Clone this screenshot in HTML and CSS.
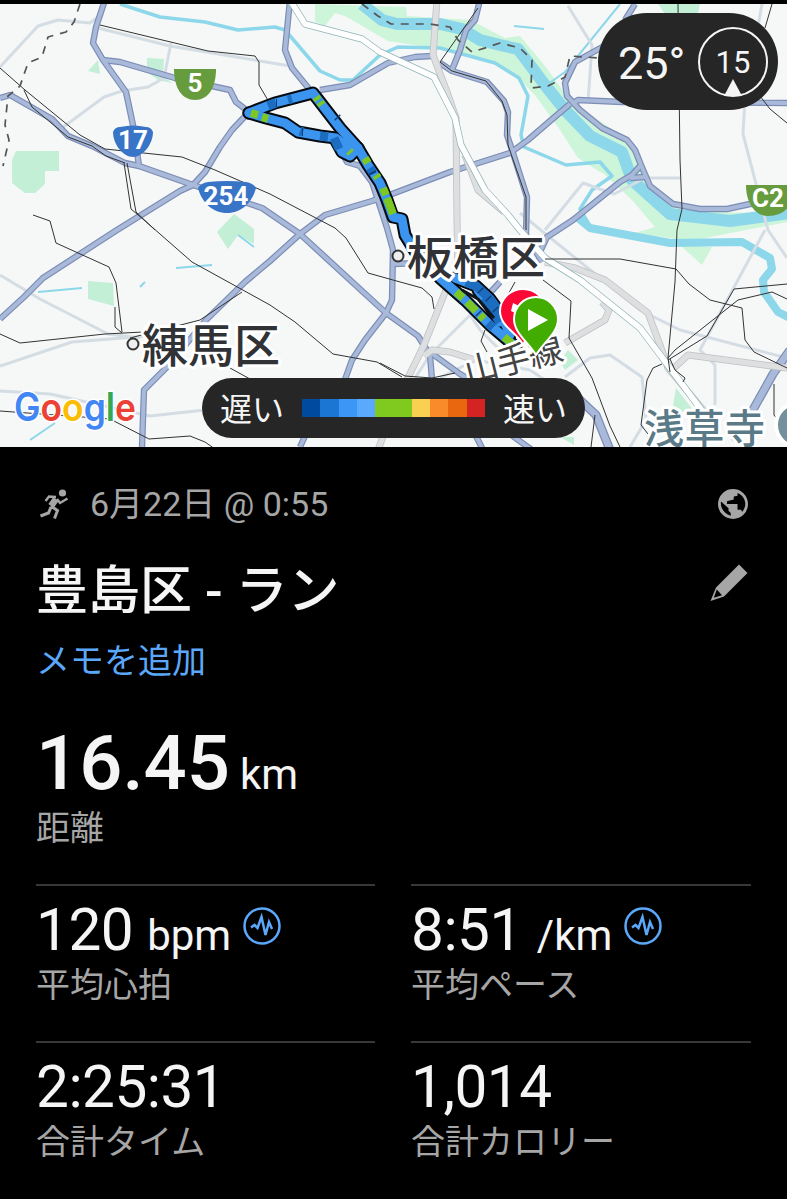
FILE: index.html
```
<!DOCTYPE html>
<html lang="ja">
<head>
    <meta charset="UTF-8">
    <meta name="viewport" content="width=device-width, initial-scale=1.0">
    <title>豊島区 - ラン</title>
    <link rel="stylesheet" href="styles.css">
</head>
<body>

    <div class="map">
        <svg class="map-canvas" viewBox="0 4 787 443">
            <defs>
                <g id="roads">
                    <path d="M105 0L96 27L93 43L103 60L126 92L134 130L139 166"/>
                    <path d="M103 60L120 62L175 78L230 90L236 102L249 112L232 130L220 147L205 172L193 185L180 191L117 230L80 254L43 278L24 297L0 319"/>
                    <path d="M0 98L10 95L52 119L68 136L92 146L125 163L139 166L193 185L262 208L300 234L386 313L418 336L430 355L432 380"/>
                    <path d="M427 350L460 374L500 398L525 385"/>
                    <path d="M142 447L144 390L168 366L206 320L245 282L270 261L300 234L325 215L372 201L392 194L450 172L510 153L528 140L550 121L570 104"/>
                    <path d="M290 0L285 50L292 68L310 90M320 90L350 85L388 63L415 57L432 56"/>
                    <path d="M440 63L452 71L487 82L504 101L508 112L507 135L513 153L527 197L526 235L542 262"/>
                    <path d="M480 0L475 20L466 30L460 50L452 70"/>
                    <path d="M635 4L625 20M606 45L575 62L565 83L567 96L580 110L602 128L627 140L635 150L641 165L650 186L673 204L700 209L727 209L750 204L775 203"/>
                    <path d="M572 104L578 100L622 102L787 103"/>
                    <path d="M540 252L547 237L573 220L620 182L632 175L641 165M630 178L645 177"/>
                    <path d="M340 150L347 162L360 166L372 182L387 228L393 250L392 300L386 313L365 340L352 360L343 385"/>
                    <path d="M393 264L420 263M488 295L500 282M300 447L305 436M475 434L483 450M510 434L532 450"/>
                </g>
                <g id="trunks">
                    <path d="M437 0L433 55L447 92L456 118L457 220L458 270L446 290L424 345L402 390"/>
                    <path d="M424 356L432 350L450 352L475 360M565 343L605 320L609 310L602 302"/>
                    <path d="M545 262L575 268L605 280L648 313L660 345L668 368L710 418M674 368L688 355L787 368M465 155L478 190L504 212M378 450L384 434"/>
                </g>
                <path id="expressway" d="M290 0L305 24L362 39L380 52L434 77L455 118L461 145L485 190L508 215L520 230L545 258L580 280L640 328L670 368L712 424"/>
                <g id="route">
                    <path d="M249 113L275 103L313 93L340 128L358 148L368 165L380 183L387 200L393 217L402 219L405 235L416 253L440 278L465 300L490 325L516 347"/>
                    <path d="M249 113L266 118L285 123L298 132L320 136L336 138L348 147M336 141L342 152L350 156L358 148"/>
                    <path d="M455 278L476 286L490 299L501 314L510 335M478 290L490 306L500 322"/>
                </g>
            </defs>

            <!-- parks -->
            <g class="park">
                <path d="M16 151H59V171H45V184L35 193H25L12 183V160Z"/>
                <path d="M98 60L100 74L88 71ZM147 58L164 59L163 76L172 83L158 80L147 72Z"/>
                <path d="M88 281L113 283L114 306L88 299ZM217 232L234 214L254 229V244L238 235L228 249Z"/>
                <path d="M658 4H700L697 18H668ZM568 350L578 360L565 370L560 361ZM676 388L693 410L680 412L673 406ZM560 437H574V445Z"/>
            </g>
            <g class="bank">
                <path d="M315 4L406 7L407 16L470 20L505 38L520 36L545 66L572 103L632 142L650 186L680 211L787 214V222L690 241L635 233L655 227L632 200L608 178L575 145L560 130L535 95L518 78L490 62L460 52L388 41L345 16L335 13L325 26L315 22Z"/>
                <path d="M560 130L590 148L612 176L600 172L578 158ZM680 245L712 247L702 265Z"/>
            </g>

            <!-- rivers -->
            <path class="river" d="M362 4L382 20L397 24L440 24L462 29L480 40L500 45L518 49L545 85L565 110L590 136L622 152L632 180L670 214L730 221L790 213"/>
            <g class="stream">
                <path class="wide" d="M578 218L590 228L670 243L742 242L770 258L772 269L763 280L764 292L778 312L790 318"/>
                <path d="M120 4L160 17L205 22L238 30L275 27L285 30L320 71L340 80L353 80L380 55L398 47L440 48L495 63L519 78L528 96L521 135L524 147L566 165L600 162L612 176L592 190L580 209L590 226"/>
                <path class="thin" d="M620 4L565 72L548 84M514 26L544 29M176 268L212 265M38 292L82 288M30 440L55 423M140 287L145 282M238 235L254 247"/>
            </g>

            <!-- small roads -->
            <g class="street">
                <path d="M0 67L38 26L58 20L90 23L98 17M62 128L104 97L122 91L148 87L164 78L171 43M98 28L170 46L290 66"/>
                <path d="M0 275L40 299L108 334L140 338M0 366L72 342L160 335M0 391L50 394L150 416L205 410"/>
                <path d="M568 6L592 45L588 102M762 4L745 100L743 134L768 230L787 258M520 213L548 236L640 310L680 330L787 358"/>
                <path d="M545 230L583 183L614 194L645 178L680 178M765 230L700 350L715 365V405M565 377L590 358L610 355L642 377L646 420L630 447"/>
                <path d="M415 378L430 355L470 315L480 330L500 350M440 378L475 360L530 370L560 390"/>
            </g>

            <use href="#roads" class="road-edge"/>
            <use href="#roads" class="road-fill"/>
            <g class="road-edge big"><path d="M790 350L773 374L735 442M580 400L596 415L610 450"/></g>
            <g class="road-fill big"><path d="M790 350L773 374L735 442M580 400L596 415L610 450"/></g>
            <use href="#trunks" class="trunk-edge"/>
            <use href="#trunks" class="trunk-fill"/>
            <use href="#expressway" class="express-edge"/>
            <use href="#expressway" class="express-fill"/>

            <!-- railways -->
            <g class="rail">
                <path d="M0 68L25 90L80 135L105 149L182 157L215 170L270 194L335 228L346 238L368 273L393 280L422 288L432 297L434 309"/>
                <path d="M24 90L32 107L68 137L92 146L106 156L125 163M124 163L131 209L144 220L192 262L270 305L295 322L333 354L377 362L402 377"/>
                <path d="M127 163L136 212L155 230M33 215L50 221L56 243L109 267L116 283L122 332M115 307V327L122 333"/>
                <path d="M0 334L20 343L105 334L143 332M0 411L110 419L149 439L190 436L205 442L215 449"/>
                <path d="M100 25L208 51L255 56L259 62V85L269 102M130 338L200 320L242 292M230 368L250 379"/>
                <path d="M478 8L440 62L452 71L486 81L502 101L507 115L508 145L526 197V230"/>
                <path d="M678 4L680 160L682 209L677 230L675 282L668 358L670 372M772 4L765 28M760 96L770 109L787 123"/>
                <path d="M545 259H620L676 269L689 284L710 300L742 308L745 340L754 352L787 368"/>
                <path d="M668 358L675 350L738 300L772 292L787 299M668 360L707 336L734 289L787 284M670 359L675 370L685 378L683 382"/>
                <path d="M543 280L571 301L569 338L592 378L610 426L620 447M662 364L653 368L647 380L641 425L648 434M485 330L481 341L487 352M595 415L591 447"/>
                <path d="M380 363L405 376L432 378L455 373M505 300L515 282M774 384V415L782 425"/>
            </g>
            <g class="border-line">
                <path d="M80 4L74 22L66 32L48 37L42 57L28 63L20 86L8 96L5 125L9 140L3 166"/>
                <path d="M362 4L378 16L391 24H430L450 27L458 40L472 52L488 47L500 43L520 48L532 60L531 88L548 86L565 77L570 56L600 58"/>
            </g>

            <!-- recorded route -->
            <use href="#route" class="route-edge"/>
            <use href="#route" class="route-fill"/>
            <path class="route-dark" d="M268 106L276 103M288 100L292 99M300 131L303 132M320 136L328 137M370 168L373 173M334 138L339 149M466 282L476 286L490 299L504 319M484 298L500 322M471 306L474 309M488 323L493 328"/>
            <path class="route-notch" d="M276 103L277 103M302 132L303 132M337 117L338 118M372 172L373 174M480 290L481 291M488 298L489 299M495 309L496 310M478 313L479 314"/>
            <path class="route-gap" d="M462 290L478 299L494 318"/>
            <path class="route-green" d="M251 113L258 115M262 117L268 119M316 97L318 100M320 102L322 105M349 151L351 153M365 158L368 163M376 175L378 178M383 188L386 195M387 198L393 214M456 292L463 298M467 302L476 311M480 315L484 319M504 337L516 347"/>

            <!-- place names -->
            <circle class="place-dot" cx="398" cy="256" r="5.5"/>
            <circle class="place-dot" cx="133" cy="344" r="5.5"/>
            <text class="place" x="407" y="274" textLength="138">板橋区</text>
            <text class="place" x="142" y="362" textLength="138">練馬区</text>
            <text class="station" transform="translate(468 384) rotate(-14)" textLength="100">山手線</text>
            <text class="temple" x="644" y="443" textLength="121">浅草寺</text>
            <circle class="poi" cx="798" cy="425" r="22"/>

            <!-- route shields -->
            <path class="shield-green" d="M174 69H216C216 88 208 100 195 100S174 88 174 69Z"/>
            <text class="shield-text" x="195" y="92">5</text>
            <path class="shield-green" d="M746 185H790V205Q783 216 768 216C755 216 746 203 746 185Z"/>
            <text class="shield-text" x="768" y="207">C2</text>
            <path class="shield-blue" d="M113 132Q115 127 120 127Q133 124 146 127Q151 127 153 132C153 144 143 157 133 157S113 144 113 132Z"/>
            <text class="shield-text" x="133" y="149">17</text>
            <path class="shield-blue" d="M198 188Q201 183 208 182Q227 180 246 182Q253 183 256 188C252 203 241 213 227 213S202 203 198 188Z"/>
            <text class="shield-text" x="226" y="205">254</text>

            <!-- finish and start pins -->
            <path class="pin-red" d="M523 345C518 333 500 327 500 311A23 22 0 0 1 546 311C546 327 528 333 523 345Z"/>
            <path class="pin-flag" d="M513 303L519 306L517 314L511 311Z"/>
            <path class="pin-green" d="M536 355C528 342 514 333 514 319A22 22 0 0 1 558 319C558 333 544 342 536 355Z"/>
            <path class="pin-play" d="M528 309L548 320L528 331Z"/>

            <text class="google" x="14" y="421" textLength="122" lengthAdjust="spacingAndGlyphs"><tspan class="g-blue">G</tspan><tspan class="g-red">o</tspan><tspan class="g-yellow">o</tspan><tspan class="g-blue">g</tspan><tspan class="g-green">l</tspan><tspan class="g-red">e</tspan></text>
        </svg>

        <div class="weather">
            <span class="temperature">25°</span>
            <div class="wind">15<span class="wind-arrow"></span></div>
        </div>

        <div class="legend">
            <span>遅い</span>
            <div class="legend-bar">
                <i class="pace1"></i><i class="pace2"></i><i class="pace3"></i><i class="pace4"></i><i class="pace5"></i><i class="pace5"></i><i class="pace6"></i><i class="pace7"></i><i class="pace8"></i><i class="pace9"></i>
            </div>
            <span>速い</span>
        </div>
    </div>

    <div class="details">
        <div class="date-row">
            <svg class="runner" viewBox="0 0 30 32">
                <circle cx="23.5" cy="5" r="3.6"/>
                <path d="M17 11L12 18" stroke-width="6.5"/>
                <path d="M17 9L10 8.500L6.500 13M18 11L21 15L28.500 10.500" stroke-width="2.400"/>
                <path d="M12 19L9.500 25L1.500 28M12 18L18.500 22.500L15.500 30.500" stroke-width="3"/>
            </svg>
            <span class="date">6月22日 @ 0:55</span>
            <svg class="globe" viewBox="0 0 24 24">
                <path fill-rule="evenodd" d="M12 2A10 10 0 1 0 12 22A10 10 0 1 0 12 2ZM15 4.600V6.500L12.500 7V9L10.500 9.500L8 10.200V12H15V15.800H17.500L18 17.300C19.200 16 20.200 14 20.200 12C20.200 8.500 18 5.700 15 4.600ZM4 10.300C3.400 14 5.800 18.500 10.500 19.900V18L9 16.500V14.800Z"/>
            </svg>
        </div>

        <div class="title-row">
            <h1>豊島区 - ラン</h1>
            <svg class="pencil" viewBox="0 0 38 38">
                <path fill-rule="evenodd" d="M0.500 37L6 23.500L29 0.500L37.500 9L14 32.500ZM6.800 25.500L3.800 33.800L12 31.200Z"/>
            </svg>
        </div>

        <a class="note">メモを追加</a>

        <div class="distance">16.45<small>km</small></div>
        <div class="label">距離</div>

        <div class="stats">
            <div class="stat">
                <div class="value">120<small>bpm</small>
                    <svg class="pulse" viewBox="0 0 38 38"><circle cx="19" cy="19" r="17.500"/><path d="M8 20.500L11.500 18L14.500 21L18.500 10L22.500 28L26 15L29 22"/></svg>
                </div>
                <div class="label">平均心拍</div>
            </div>
            <div class="stat">
                <div class="value">8:51<small class="pace-unit">/km</small>
                    <svg class="pulse" viewBox="0 0 38 38"><circle cx="19" cy="19" r="17.500"/><path d="M8 20.500L11.500 18L14.500 21L18.500 10L22.500 28L26 15L29 22"/></svg>
                </div>
                <div class="label">平均ペース</div>
            </div>
            <div class="stat">
                <div class="value">2:25:31</div>
                <div class="label">合計タイム</div>
            </div>
            <div class="stat">
                <div class="value">1,014</div>
                <div class="label">合計カロリー</div>
            </div>
        </div>
    </div>

</body>
</html>
```
FILE: styles.css
```
* {
    box-sizing: border-box;
}
body {
    margin: 0;
    padding-top: 4px;
    height: 1199px;
    overflow: hidden;
    background-color: #000;
    color: #f5f5f5;
    font-family: Roboto, "Noto Sans CJK JP", sans-serif;
}

/* map */
.map {
    position: relative;
    height: 443px;
    background-color: #f6f7f7;
    overflow: hidden;
}
.map-canvas {
    display: block;
    width: 787px;
    height: 443px;
    fill: none;
    stroke-linejoin: round;
}
.park {
    fill: #c2efd5;
}
.bank {
    fill: #cdf5d9;
}
.river {
    stroke: #8cd7e9;
    stroke-width: 12;
}
.stream {
    stroke: #8cd7e9;
    stroke-width: 3.5;
}
.stream .wide {
    stroke-width: 8;
}
.stream .thin {
    stroke-width: 2;
}
.street {
    stroke: #d5dde4;
    stroke-width: 3;
}
.road-edge {
    stroke: #7c8db6;
    stroke-width: 6.4;
}
.road-fill {
    stroke: #a9b9d9;
    stroke-width: 4;
}
.road-edge.big {
    stroke-width: 9;
}
.road-fill.big {
    stroke-width: 6.5;
}
.trunk-edge {
    stroke: #bfc1c3;
    stroke-width: 7;
}
.trunk-fill {
    stroke: #dddfe1;
    stroke-width: 5.4;
}
.express-edge {
    stroke: #8fb3b4;
    stroke-width: 7;
}
.express-fill {
    stroke: #fff;
    stroke-width: 5.6;
}
.rail {
    stroke: #333;
    stroke-width: 1;
}
.border-line {
    stroke: #555;
    stroke-width: 1.7;
    stroke-dasharray: 8 7;
}
.route-edge {
    stroke: #050a10;
    stroke-width: 13;
    stroke-linecap: round;
}
.route-fill {
    stroke: #3b94ee;
    stroke-width: 9;
    stroke-linecap: round;
}
.route-dark {
    stroke: #1c6cc0;
    stroke-width: 9;
}
.route-notch {
    stroke: #0d3f80;
    stroke-width: 8;
}
.route-gap {
    stroke: #10151c;
    stroke-width: 3;
}
.route-green {
    stroke: #7cc722;
    stroke-width: 8;
}
.place-dot {
    fill: #eee;
    stroke: #333;
    stroke-width: 2;
}
.place, .station, .temple {
    font-family: "Noto Sans CJK JP", sans-serif;
    stroke: #fff;
    stroke-width: 6px;
    paint-order: stroke;
}
.place {
    font-size: 46px;
    font-weight: 500;
    fill: #303236;
}
.station {
    font-size: 34px;
    fill: #444;
}
.temple {
    font-size: 40px;
    font-weight: 500;
    fill: #5b7a87;
}
.poi {
    fill: #73909c;
    stroke: #fff;
    stroke-width: 4;
}
.shield-green {
    fill: #679c3e;
}
.shield-blue {
    fill: #3975c6;
}
.shield-text {
    fill: #fff;
    font-size: 26px;
    font-weight: 700;
    text-anchor: middle;
}
.pin-red, .pin-green {
    stroke: #fff;
    stroke-width: 2;
}
.pin-red {
    fill: #fa0836;
}
.pin-green {
    fill: #43ac00;
}
.pin-flag, .pin-play {
    fill: #fff;
}
.google {
    font-family: Inter, sans-serif;
    font-size: 39px;
    font-weight: 600;
    stroke: #fff;
    stroke-width: 3px;
    paint-order: stroke;
}
.g-blue {
    fill: #4285f4;
}
.g-red {
    fill: #ea4335;
}
.g-yellow {
    fill: #fbbc05;
}
.g-green {
    fill: #34a853;
}

/* overlays on the map */
.weather {
    position: absolute;
    top: 9px;
    right: 9px;
    width: 180px;
    height: 97px;
    padding: 0 10px 0 20px;
    border-radius: 49px;
    background-color: #262626;
    display: flex;
    align-items: center;
    justify-content: space-between;
}
.temperature {
    padding-top: 4px;
    font-size: 45px;
}
.wind {
    position: relative;
    width: 70px;
    height: 70px;
    border: 2px solid #f5f5f5;
    border-radius: 50%;
    font-size: 31px;
    line-height: 68px;
    text-align: center;
}
.wind-arrow {
    position: absolute;
    left: 24px;
    bottom: -1px;
    border: 9px solid transparent;
    border-top: 0;
    border-bottom: 17px solid #f5f5f5;
}
.legend {
    position: absolute;
    top: 374px;
    left: 202px;
    width: 383px;
    height: 60px;
    padding: 0 18px;
    border-radius: 30px;
    background-color: #262626;
    display: flex;
    align-items: center;
    justify-content: space-between;
    font-size: 32px;
    line-height: 60px;
}
.legend span {
    padding-top: 4px;
}
.legend-bar {
    display: flex;
    width: 183px;
    height: 18px;
}
.legend-bar i {
    flex: 1;
}
.pace1 {
    background-color: #004b9f;
}
.pace2 {
    background-color: #1b76d3;
}
.pace3 {
    background-color: #3b97f5;
}
.pace4 {
    background-color: #59a9ff;
}
.pace5 {
    background-color: #80ca20;
}
.pace6 {
    background-color: #fad053;
}
.pace7 {
    background-color: #fa8b2a;
}
.pace8 {
    background-color: #e9680f;
}
.pace9 {
    background-color: #d32323;
}

/* activity details */
.details {
    padding: 37px 36px 0;
}
.date-row {
    display: flex;
    align-items: center;
    height: 40px;
    color: #a6a6a6;
}
.runner {
    width: 30px;
    height: 32px;
    margin-left: 3px;
    fill: #a6a6a6;
}
.runner path {
    fill: none;
    stroke: #a6a6a6;
}
.date {
    flex: 1;
    margin-left: 21px;
    font-size: 34px;
    line-height: 40px;
}
.globe {
    width: 36px;
    height: 36px;
    fill: #a6a6a6;
}
.title-row {
    display: flex;
    justify-content: space-between;
    margin-top: 38px;
    padding-right: 3px;
}
h1 {
    margin: 0;
    font-size: 52px;
    font-weight: 500;
    line-height: 60px;
}
.pencil {
    width: 38px;
    height: 38px;
    margin-top: 2px;
    fill: #a6a6a6;
}
.note {
    display: block;
    margin-top: 19px;
    font-size: 34px;
    line-height: 40px;
    color: #5ba8fa;
}
.distance {
    height: 80px;
    margin-top: 42px;
    font-size: 76px;
    font-weight: 500;
    line-height: 80px;
}
small {
    margin-left: 14px;
    font-size: 42px;
    font-weight: 400;
    letter-spacing: 0;
    line-height: 1;
}
.distance small {
    margin-left: 10px;
}
.label {
    margin-top: 5px;
    font-size: 34px;
    line-height: 40px;
    color: #a6a6a6;
}
.stats {
    display: grid;
    grid-template-columns: 339px 340px;
    column-gap: 36px;
    row-gap: 36px;
    margin-top: 36px;
}
.stat {
    border-top: 2px solid #383838;
    padding-top: 14px;
}
.value {
    display: flex;
    align-items: baseline;
    height: 60px;
    font-size: 58.5px;
    letter-spacing: -0.5px;
    line-height: 60px;
    white-space: nowrap;
}
.value .pace-unit {
    margin-left: 15px;
}
.pulse {
    align-self: flex-start;
    width: 38px;
    height: 38px;
    margin: 7px 0 0 12px;
    fill: none;
    stroke: #5ba8fa;
    stroke-width: 2.5;
}
```
